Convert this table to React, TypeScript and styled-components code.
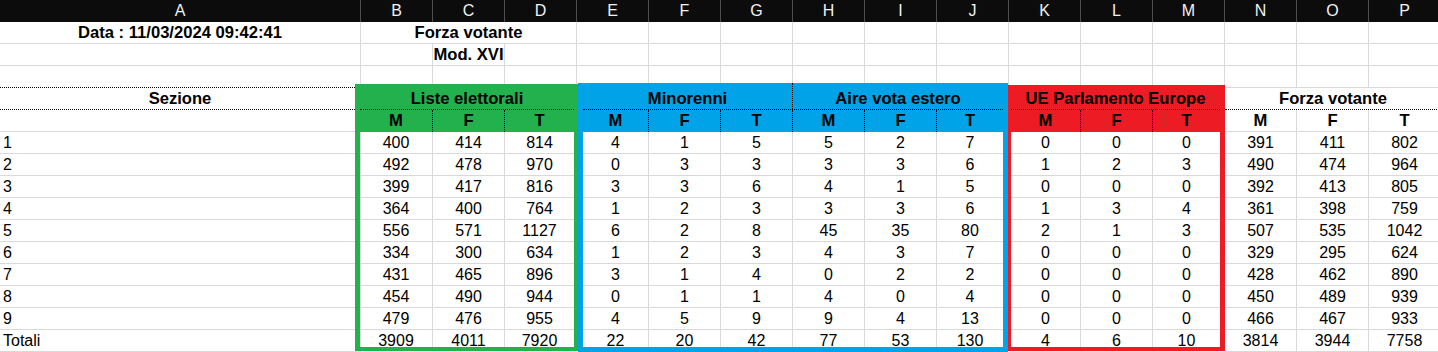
import React from "react";
import styled, { createGlobalStyle } from "styled-components";

const GRID = "#d9d9d9";
const DOT = "1px dotted #000";

const GlobalStyle = createGlobalStyle`
  html, body {
    margin: 0;
    padding: 0;
    background: #fff;
    overflow: hidden;
  }
  body {
    font-family: "Liberation Sans", Arial, sans-serif;
    color: #000;
  }
`;

const letters = "ABCDEFGHIJKLMNOP".split("");
const sezioni = ["1", "2", "3", "4", "5", "6", "7", "8", "9", "Totali"];

const liste = [
  [400, 414, 814],
  [492, 478, 970],
  [399, 417, 816],
  [364, 400, 764],
  [556, 571, 1127],
  [334, 300, 634],
  [431, 465, 896],
  [454, 490, 944],
  [479, 476, 955],
  [3909, 4011, 7920],
];
// minorenni + aire vota estero
const esteri = [
  [4, 1, 5, 5, 2, 7],
  [0, 3, 3, 3, 3, 6],
  [3, 3, 6, 4, 1, 5],
  [1, 2, 3, 3, 3, 6],
  [6, 2, 8, 45, 35, 80],
  [1, 2, 3, 4, 3, 7],
  [3, 1, 4, 0, 2, 2],
  [0, 1, 1, 4, 0, 4],
  [4, 5, 9, 9, 4, 13],
  [22, 20, 42, 77, 53, 130],
];
const europa = [
  [0, 0, 0],
  [1, 2, 3],
  [0, 0, 0],
  [1, 3, 4],
  [2, 1, 3],
  [0, 0, 0],
  [0, 0, 0],
  [0, 0, 0],
  [0, 0, 0],
  [4, 6, 10],
];
const forza = [
  [391, 411, 802],
  [490, 474, 964],
  [392, 413, 805],
  [361, 398, 759],
  [507, 535, 1042],
  [329, 295, 624],
  [428, 462, 890],
  [450, 489, 939],
  [466, 467, 933],
  [3814, 3944, 7758],
];

type GroupProps = {
  color?: string;
  span: number;
  margin: string;
  borders: string;
  lift: number;
  cols: string;
  titles: string[];
  rows: number[][];
};

const Group: React.FC<GroupProps> = ({ color, span, margin, borders, lift, cols, titles, rows }) => {
  const framed = !!color;
  const sub = titles.flatMap(() => ["M", "F", "T"]);
  return (
    <Box $color={color} $span={span} $margin={margin} $borders={borders}>
      <Head $color={color}>
        <TitleRow $cols={cols} $lift={lift}>
          {titles.map((t, i) => (
            <Title key={t} $divider={i < titles.length - 1}>
              {t}
            </Title>
          ))}
        </TitleRow>
        <Row $cols={cols} $framed={framed}>
          {sub.map((s, i) => (
            <SubCell key={i} $framed={framed} $last={i === sub.length - 1}>
              {s}
            </SubCell>
          ))}
        </Row>
      </Head>
      {rows.map((r, ri) => (
        <Row key={ri} $cols={cols} $framed={framed} $clip={framed && ri === rows.length - 1}>
          {r.map((v, ci) => (
            <Num key={ci} $framed={framed} $last={ci === r.length - 1}>
              {v}
            </Num>
          ))}
        </Row>
      ))}
    </Box>
  );
};

const App: React.FC = () => {
  return (
    <>
      <GlobalStyle />
      <Sheet>
        {letters.map((l) => (
          <ColHead key={l}>{l}</ColHead>
        ))}

        <Cell $bold>Data : 11/03/2024 09:42:41</Cell>
        <Cell $bold $span={3}>
          Forza votante
        </Cell>
        {letters.slice(4).map((l) => (
          <Cell key={"r1" + l} />
        ))}

        <Cell />
        <Cell />
        <Cell $bold>Mod. XVI</Cell>
        {letters.slice(3).map((l) => (
          <Cell key={"r2" + l} />
        ))}

        <Cell $dotted />
        {letters.slice(1).map((l) => (
          <Cell key={"r3" + l} />
        ))}

        <SectionCol>
          <Cell $bold $dotted>
            Sezione
          </Cell>
          <Cell />
          {sezioni.map((s) => (
            <Cell key={s} $align="left">
              {s}
            </Cell>
          ))}
        </SectionCol>

        <Group
          color="#22b14c"
          span={3}
          margin="-4px -1px 0 -6px"
          borders="0 4px 4px 5px"
          lift={4}
          cols="73px 72px 69px"
          titles={["Liste elettorali"]}
          rows={liste}
        />
        <Group
          color="#00a2e8"
          span={6}
          margin="-5px 1px 0 1px"
          borders="0 5px 5px 5px"
          lift={5}
          cols="66px 72px 72px 72px 72px 66px"
          titles={["Minorenni", "Aire vota estero"]}
          rows={esteri}
        />
        <Group
          color="#ed1c24"
          span={3}
          margin="-3px 0 0 -1px"
          borders="0 5px 4px 3px"
          lift={3}
          cols="70px 72px 67px"
          titles={["UE Parlamento Europe"]}
          rows={europa}
        />
        <Group
          span={3}
          margin="0"
          borders="0"
          lift={0}
          cols="72px 72px 72px"
          titles={["Forza votante"]}
          rows={forza}
        />
      </Sheet>
    </>
  );
};

const Sheet = styled.div`
  display: grid;
  grid-template-columns: 361px repeat(15, 72px);
  grid-template-rows: repeat(4, 22px) auto;
  width: 1441px;
  height: 352px;
  overflow: hidden;
`;

const ColHead = styled.div`
  height: 22px;
  box-sizing: border-box;
  background: #0c0c0c;
  color: #f2f2f2;
  border-right: 1px solid #4d4d4d;
  font-size: 16px;
  line-height: 21px;
  text-align: center;
`;

const Cell = styled.div<{ $bold?: boolean; $span?: number; $dotted?: boolean; $align?: string }>`
  grid-column: span ${(p) => p.$span || 1};
  height: 22px;
  box-sizing: border-box;
  padding: 1px 0 0 ${(p) => (p.$align === "left" ? "3px" : "0")};
  border-right: 1px solid ${GRID};
  border-bottom: ${(p) => (p.$dotted ? DOT : `1px solid ${GRID}`)};
  font-size: ${(p) => (p.$bold ? "16.6px" : "16px")};
  font-weight: ${(p) => (p.$bold ? "bold" : "normal")};
  line-height: 20px;
  text-align: ${(p) => p.$align || "center"};
  white-space: nowrap;
`;

const SectionCol = styled.div`
  grid-row: 5;
  grid-column: 1;
  display: flex;
  flex-direction: column;
`;

const Box = styled.div<{ $color?: string; $span: number; $margin: string; $borders: string }>`
  grid-row: 5;
  grid-column: span ${(p) => p.$span};
  align-self: start;
  margin: ${(p) => p.$margin};
  border-style: solid;
  border-color: ${(p) => p.$color || "transparent"};
  border-width: ${(p) => p.$borders};
  overflow: hidden;
`;

const Head = styled.div<{ $color?: string }>`
  background: ${(p) => p.$color || "transparent"};
`;

const TitleRow = styled.div<{ $cols: string; $lift: number }>`
  display: grid;
  grid-template-columns: ${(p) => p.$cols};
  height: ${(p) => 22 + p.$lift}px;
  box-sizing: border-box;
  border-bottom: ${DOT};
`;

const Title = styled.div<{ $divider: boolean }>`
  grid-column: span 3;
  display: flex;
  align-items: flex-end;
  justify-content: center;
  border-right: ${(p) => (p.$divider ? DOT : "none")};
  font-size: 16.6px;
  font-weight: bold;
  line-height: 20px;
  white-space: nowrap;
`;

const Row = styled.div<{ $cols: string; $framed: boolean; $clip?: boolean }>`
  display: grid;
  grid-template-columns: ${(p) => p.$cols};
  height: ${(p) => (p.$clip ? "17px" : "22px")};
  box-sizing: border-box;
  overflow: hidden;
  border-bottom: ${(p) => (p.$clip ? "none" : `1px solid ${GRID}`)};
  ${Head} & {
    border-bottom: ${(p) => (p.$framed ? "none" : `1px solid ${GRID}`)};
  }
`;

const SubCell = styled.div<{ $framed: boolean; $last: boolean }>`
  padding-top: 1px;
  border-right: ${(p) => (p.$framed ? (p.$last ? "none" : DOT) : `1px solid ${GRID}`)};
  font-size: 16.6px;
  font-weight: bold;
  line-height: 20px;
  text-align: center;
`;

const Num = styled.div<{ $framed: boolean; $last: boolean }>`
  padding-top: 1px;
  border-right: ${(p) => (p.$framed && p.$last ? "none" : `1px solid ${GRID}`)};
  font-size: 16px;
  line-height: 20px;
  text-align: center;
  white-space: nowrap;
`;

export default App;
